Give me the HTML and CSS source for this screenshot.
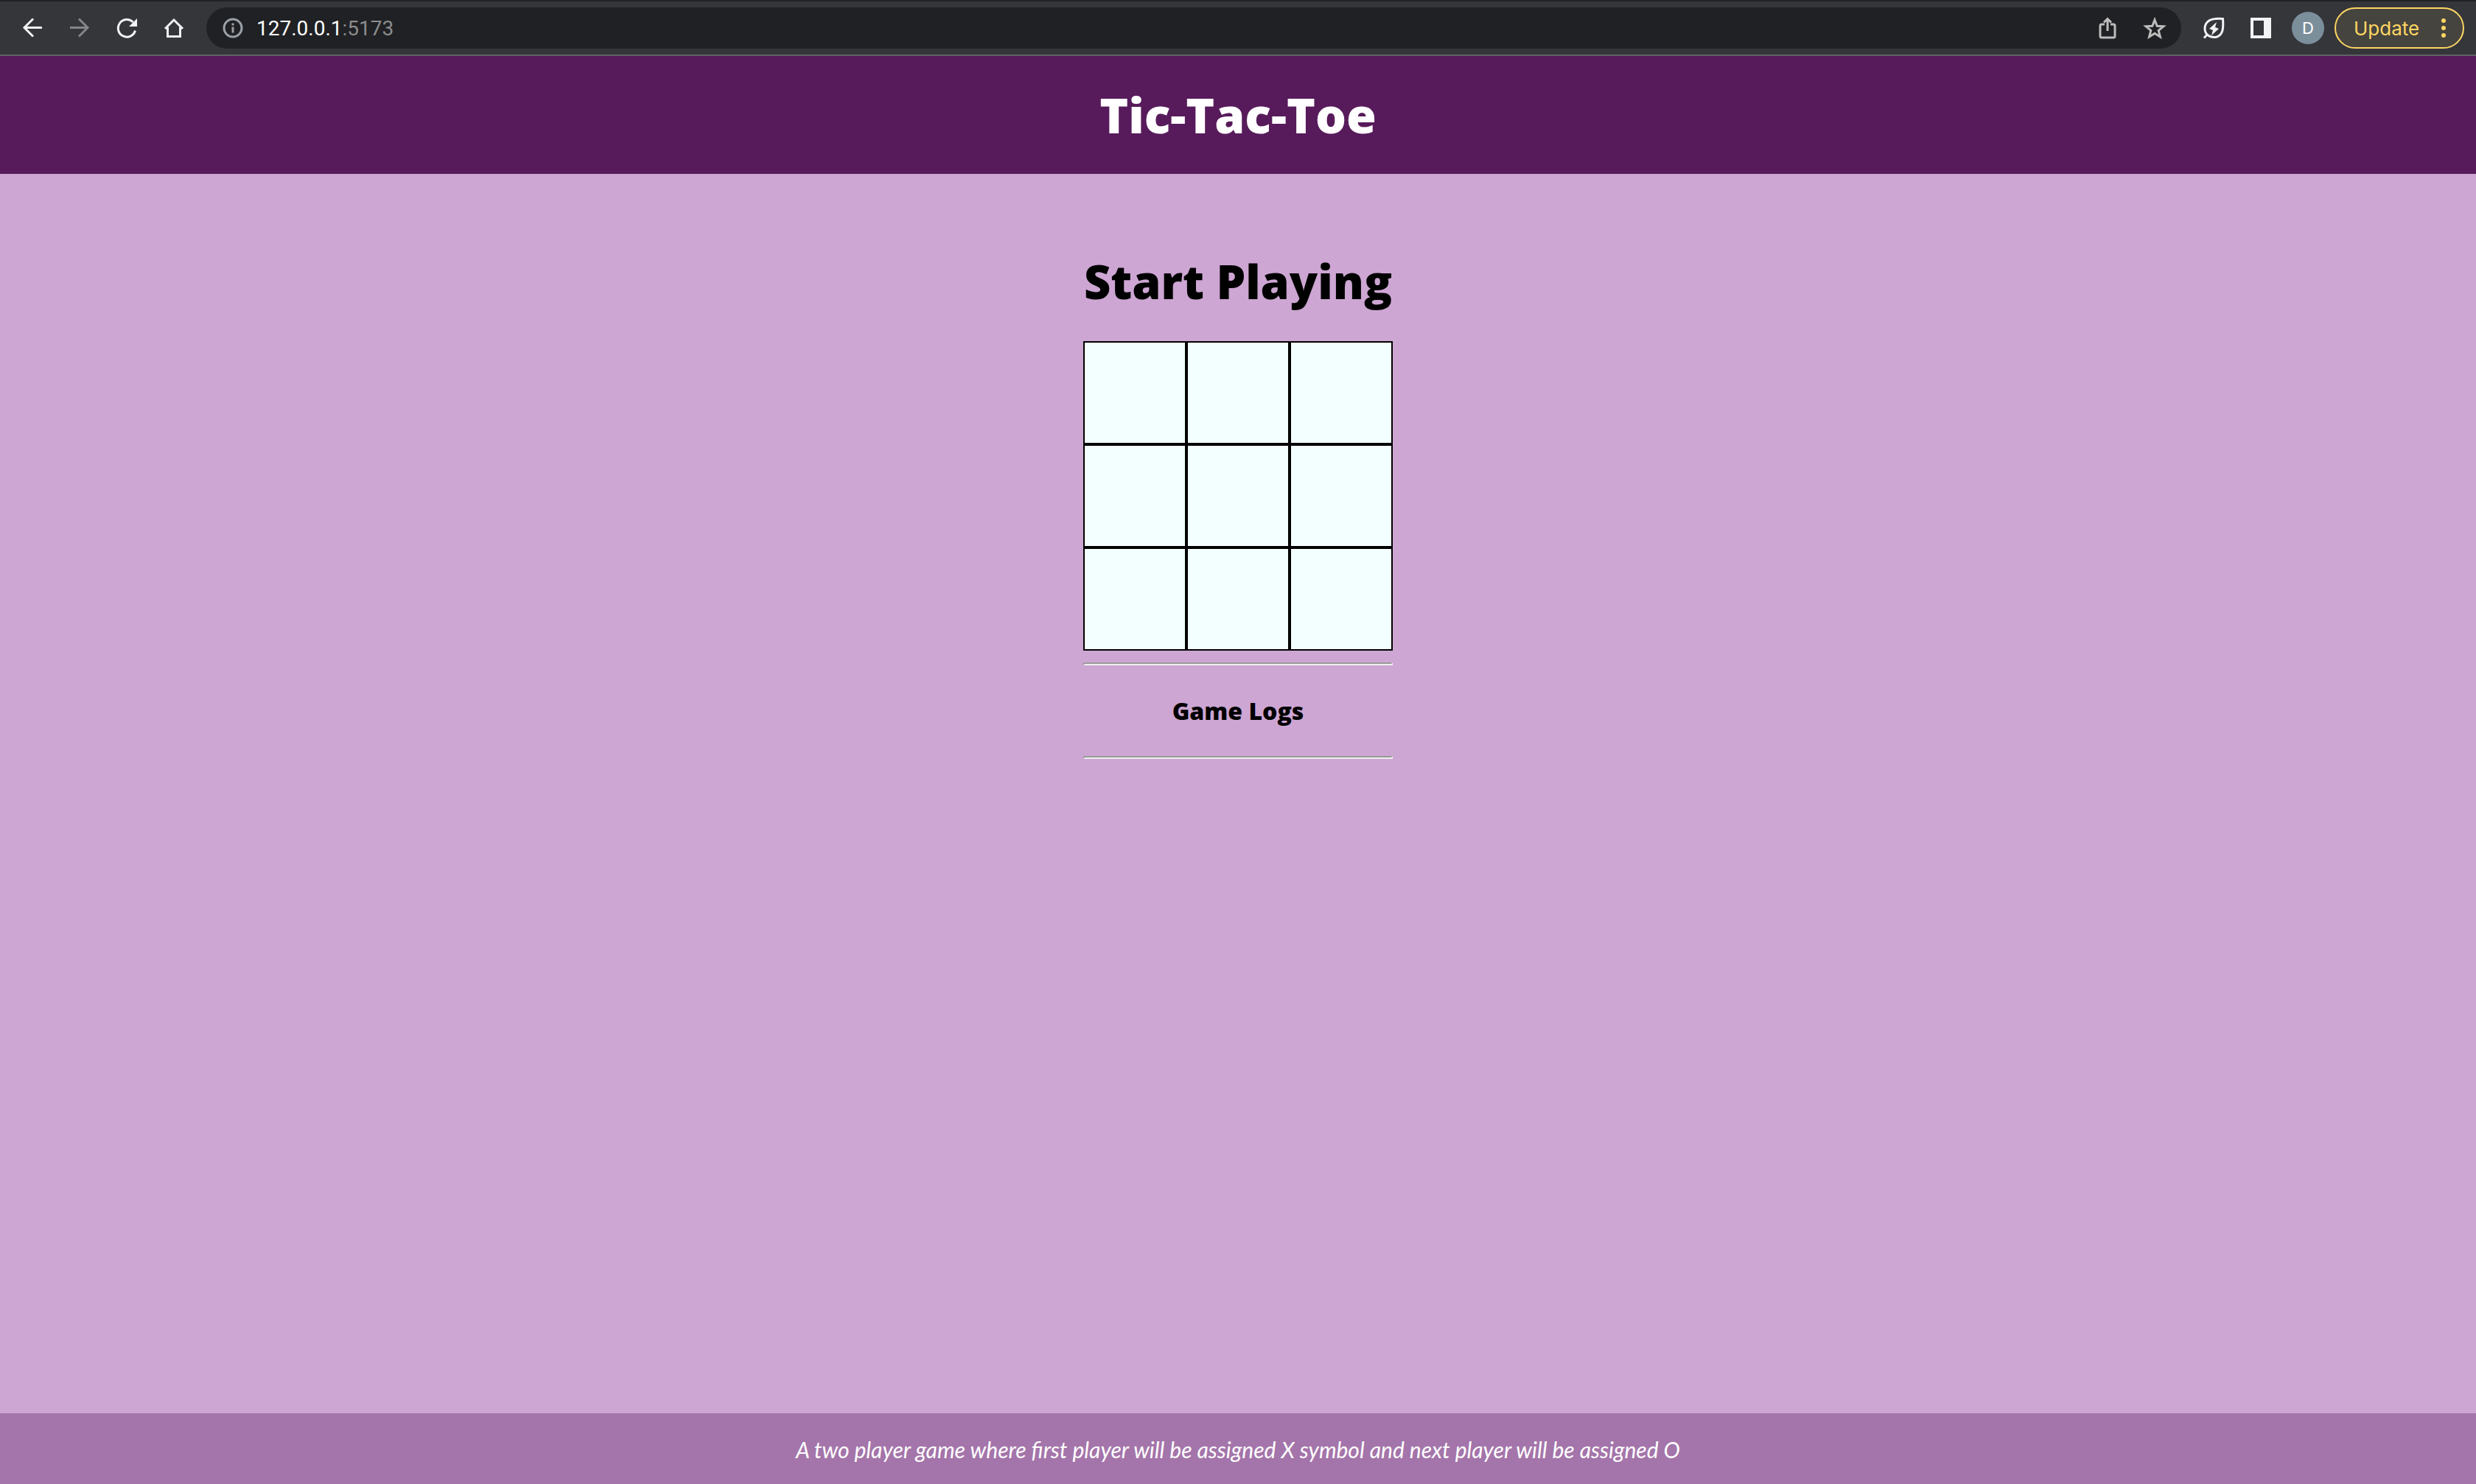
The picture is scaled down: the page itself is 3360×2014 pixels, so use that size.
FILE: index.html
```html
<!DOCTYPE html>
<html lang="en">
<head>
<meta charset="utf-8">
<title>Tic-Tac-Toe</title>
<link rel="stylesheet" href="styles.css">
</head>
<body>
<nav class="toolbar" aria-label="Browser">
  <div class="nav-buttons">
    <button class="icon-button" aria-label="Back"><svg viewBox="0 0 32 32"><path d="M29 15.500H5M17 3.500 5 15.500l12 12" /></svg></button>
    <button class="icon-button dim" aria-label="Forward"><svg viewBox="0 0 32 32"><path d="M3 15.500h24M15 3.500l12 12-12 12" /></svg></button>
    <button class="icon-button" aria-label="Reload"><svg viewBox="0 0 32 32"><path d="M27.500 19.500A11.800 11.800 0 1 1 24.500 8" /><path class="solid" d="M30 3v11H19z" /></svg></button>
    <button class="icon-button" aria-label="Home"><svg viewBox="0 0 32 32"><path d="M4 17 16 5l12 12M7.500 15v12.500h17V15" /></svg></button>
  </div>
  <div class="omnibox">
    <svg class="info" viewBox="0 0 32 32"><circle cx="16" cy="16" r="12" /><path d="M16 14.500v8M16 9.500v3" /></svg>
    <span class="url">127.0.0.1<span class="port">:5173</span></span>
    <button class="icon-button soft" aria-label="Share"><svg viewBox="0 0 32 32"><path d="M12 11H8q-2 0-2 2v14q0 2 2 2h16q2 0 2-2V13q0-2-2-2h-4M16 20V4M11 8.500l5-5 5 5" /></svg></button>
    <button class="icon-button soft" aria-label="Bookmark"><svg viewBox="0 0 32 32"><path d="m16 5 3.200 8.200 8.800.6-6.800 5.600 2.200 8.600-7.400-4.800L8.600 28l2.200-8.600L4 13.800l8.800-.6z" /></svg></button>
  </div>
  <div class="actions">
    <button class="icon-button" aria-label="Energy saver"><svg viewBox="0 0 32 32"><path d="M28.500 3.500C13 2 4 6 4 17c0 9 9 13 16.500 11 8-3 9-11 8-24.500zM7.500 24.500 3 29.500" /><path class="solid" d="m20 8-10 9 5 2-2 7 10-9-5-2z" /></svg></button>
    <button class="icon-button" aria-label="Side panel"><svg viewBox="0 0 32 32"><path class="solid" fill-rule="evenodd" d="M2 2h28v28H2zM6 6v20h14V6z" /></svg></button>
    <button class="avatar">D</button>
    <button class="update">Update<svg viewBox="0 0 8 28"><circle cx="4" cy="4" r="3" /><circle cx="4" cy="14" r="3" /><circle cx="4" cy="24" r="3" /></svg></button>
  </div>
</nav>
<header class="banner"><h1>Tic-Tac-Toe</h1></header>
<main class="game">
  <h1>Start Playing</h1>
  <div class="board">
    <button class="square" aria-label="Square 1"></button>
    <button class="square" aria-label="Square 2"></button>
    <button class="square" aria-label="Square 3"></button>
    <button class="square" aria-label="Square 4"></button>
    <button class="square" aria-label="Square 5"></button>
    <button class="square" aria-label="Square 6"></button>
    <button class="square" aria-label="Square 7"></button>
    <button class="square" aria-label="Square 8"></button>
    <button class="square" aria-label="Square 9"></button>
  </div>
  <section class="logs">
    <hr>
    <h3>Game Logs</h3>
    <hr>
  </section>
</main>
<footer class="note">A two player game where first player will be assigned X symbol and next player will be assigned O</footer>
</body>
</html>
```
FILE: styles.css
```css
* {
  box-sizing: border-box;
}

body {
  display: flex;
  flex-direction: column;
  min-height: 100vh;
  margin: 0;
  background: #cda6d3;
  font-family: "Gill Sans", Lato, sans-serif;
}

button {
  padding: 0;
  border: 0;
  background: none;
  color: inherit;
  font: inherit;
}

h1,
h3 {
  margin: 0;
  font-family: "Gill Sans", "Open Sans", sans-serif;
  font-weight: 800;
}

.toolbar {
  display: flex;
  align-items: center;
  height: 76px;
  padding: 0 16px 0 12px;
  border-top: 2px solid #202124;
  border-bottom: 2px solid #5f6164;
  background: #35363a;
  color: #f1f3f4;
  font-family: Inter, sans-serif;
}

.nav-buttons,
.actions {
  display: flex;
  align-items: center;
}

.nav-buttons {
  margin-right: 12px;
}

.icon-button {
  display: flex;
  align-items: center;
  justify-content: center;
  width: 64px;
  height: 56px;
}

.icon-button svg,
.info {
  width: 32px;
  height: 32px;
  fill: none;
  stroke: currentColor;
  stroke-width: 3;
}

.icon-button .solid {
  fill: currentColor;
  stroke: none;
}

.dim {
  color: #85868a;
}

.soft {
  color: #bdbdbd;
}

.omnibox {
  display: flex;
  flex: 1;
  align-items: center;
  height: 56px;
  padding: 0 4px 0 20px;
  border-radius: 28px;
  background: #202124;
}

.info {
  color: #9aa0a6;
}

.url {
  flex: 1;
  margin-left: 16px;
  color: #fff;
  font-family: Roboto, sans-serif;
  font-size: 28px;
}

.port {
  color: #8b8c8e;
}

.actions {
  margin-left: 12px;
}

.avatar {
  width: 44px;
  height: 44px;
  margin: 0 14px 0 10px;
  border-radius: 50%;
  background: #7b8f9b;
  color: #fff;
  font-size: 22px;
}

.update {
  display: flex;
  align-items: center;
  justify-content: space-between;
  width: 176px;
  height: 56px;
  padding: 0 22px 0 24px;
  border: 2px solid #fdd663;
  border-radius: 28px;
  background: #46443e;
  color: #fdd663;
  font-size: 26px;
}

.update svg {
  width: 8px;
  height: 28px;
  fill: currentColor;
}

.banner {
  display: flex;
  align-items: center;
  justify-content: center;
  height: 160px;
  padding-bottom: 2px;
  background: #571b5b;
  color: #fff;
}

.banner h1,
.game h1 {
  font-size: 63px;
  line-height: 76px;
}

.banner h1 {
  font-size: 66px;
  font-kerning: none;
}

.game {
  display: flex;
  flex: 1;
  flex-direction: column;
  align-items: center;
  padding: 108px 16px 16px;
}

.board {
  display: grid;
  grid-template-columns: repeat(3, 140px);
  grid-auto-rows: 140px;
  margin-top: 43px;
}

.square {
  border: 2px solid #000;
  background: #f3ffff;
}

.logs {
  width: 420px;
  padding-top: 16px;
  text-align: center;
}

.logs hr {
  margin: 0;
  border: 2px solid;
  border-color: #9a9a9a #eee #eee #9a9a9a;
}

.logs h3 {
  padding: 42px 0;
  font-size: 32px;
  line-height: 39px;
}

.note {
  padding: 30px 16px 28px;
  background: #a475aa;
  color: #fff;
  font-size: 30px;
  font-style: italic;
  line-height: 38px;
  text-align: center;
}
```
